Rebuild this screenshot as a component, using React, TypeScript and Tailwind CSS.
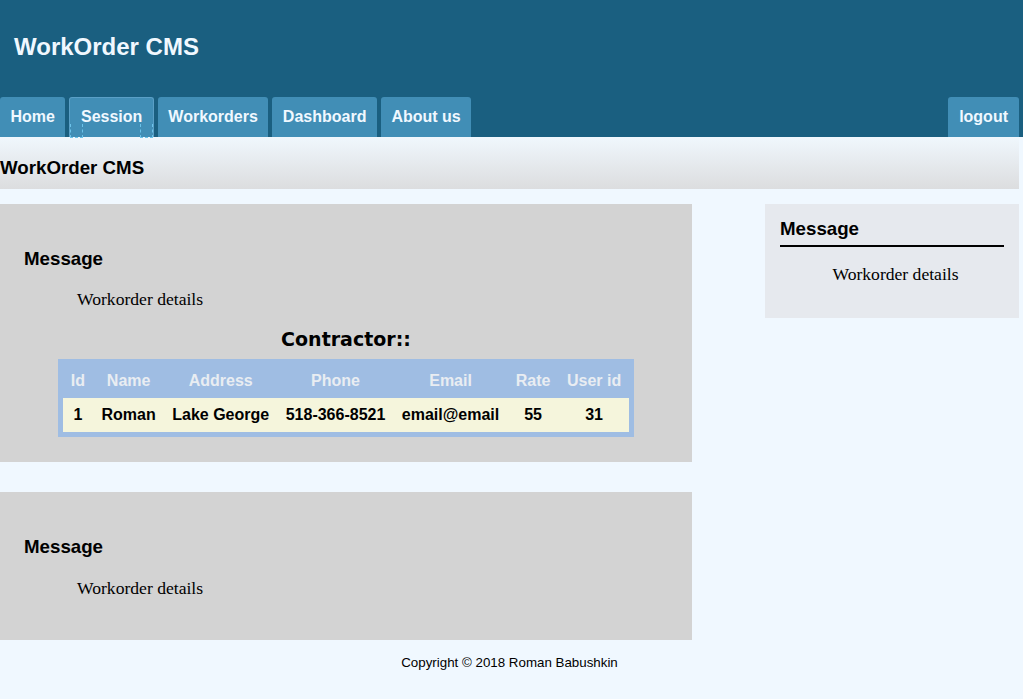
import React from "react";

const tabs = ["Home", "Session", "Workorders", "Dashboard", "About us"];

export default function App() {
  const sans = { fontFamily: '"Liberation Sans", Arial, sans-serif' };
  const serif = { fontFamily: '"Liberation Serif", "Times New Roman", serif' };
  return (
    <div className="min-h-[699px] bg-[#f0f8ff] text-black leading-[normal]" style={sans}>
      <header className="bg-[#1a5f80] h-[137px] flex flex-col">
        <div className="h-[97px] pt-[33px] pl-[14px]">
          <h1 className="text-[24px] font-bold text-[#f0f8ff] leading-[normal]">WorkOrder CMS</h1>
        </div>
        <nav className="h-[40px] flex items-stretch gap-[4px] pr-[4px]">
          {tabs.map((t) =>
            t === "Session" ? (
              <div
                key={t}
                className="relative flex items-center px-[10.5px] pb-[1px] rounded-t-[3px] bg-[#418eb6] border border-[#5a9fc6] border-b-0 text-[16px] font-bold text-[#f0f8ff]"
              >
                {t}
                <span className="absolute left-[0px] bottom-[-1px] w-[13px] h-[14px] border border-dashed border-[#6cc3ea] border-t-0" />
                <span className="absolute right-[0px] bottom-[-1px] w-[13px] h-[14px] border border-dashed border-[#6cc3ea] border-t-0" />
              </div>
            ) : (
              <div
                key={t}
                className="flex items-center px-[10.5px] rounded-t-[3px] bg-[#418eb6] text-[16px] font-bold text-[#f0f8ff]"
              >
                {t}
              </div>
            )
          )}
          <div className="ml-auto flex items-center px-[11px] rounded-t-[3px] bg-[#418eb6] text-[16px] font-bold text-[#f0f8ff]">
            logout
          </div>
        </nav>
      </header>

      <div className="pr-[4px]">
        <div className="h-[52px] pt-[20px] bg-gradient-to-b from-[#f0f7fd] to-[#dcdddf]">
          <h2 className="text-[18.72px] font-bold leading-[normal]">WorkOrder CMS</h2>
        </div>

        <div className="flex mt-[15px]">
          <main className="w-[692px] flex flex-col">
            <section className="bg-[#d3d3d3] h-[258px] pt-[44px] px-[24px]">
              <h3 className="text-[18.72px] font-bold leading-[normal]">Message</h3>
              <p className="mt-[19px] pl-[53px] text-[17.6px] leading-[normal]" style={serif}>
                Workorder details
              </p>
              <h4
                className="mt-[17.5px] text-center text-[19px] font-bold leading-[normal] -ml-[24px] -mr-[24px]"
                style={{ fontFamily: '"DejaVu Sans", Verdana, sans-serif' }}
              >
                Contractor::
              </h4>
              <div className="flex justify-center mt-[9px] -ml-[24px] -mr-[24px]">
                <div className="bg-[#9fbde3] p-[5px]">
                  <table className="border-collapse text-[16px] font-bold">
                    <thead>
                      <tr className="h-[34px] text-[#e9edf2]">
                        {["Id", "Name", "Address", "Phone", "Email", "Rate", "User id"].map((h) => (
                          <th key={h} className="px-[8.25px] text-center font-bold">
                            {h}
                          </th>
                        ))}
                      </tr>
                    </thead>
                    <tbody>
                      <tr className="h-[34px] bg-[#f5f5dc]">
                        {["1", "Roman", "Lake George", "518-366-8521", "email@email", "55", "31"].map((c, i) => (
                          <td key={i} className="px-[8.25px] text-center">
                            {c}
                          </td>
                        ))}
                      </tr>
                    </tbody>
                  </table>
                </div>
              </div>
            </section>

            <section className="bg-[#d3d3d3] h-[148px] mt-[30px] pt-[44px] px-[24px]">
              <h3 className="text-[18.72px] font-bold leading-[normal]">Message</h3>
              <p className="mt-[20px] pl-[53px] text-[17.6px] leading-[normal]" style={serif}>
                Workorder details
              </p>
            </section>

            <footer className="mt-[14.5px] text-[13.33px] leading-[normal] w-[1019px] text-center">
              Copyright © 2018 Roman Babushkin
            </footer>
          </main>

          <aside className="ml-[73px] w-[254px] h-[114px] bg-[#e6e9ee] pt-[14px] px-[15px] self-start">
            <h3 className="text-[18.72px] font-bold leading-[normal] border-b-2 border-black pb-[4.5px]">Message</h3>
            <p className="mt-[17px] pl-[7px] text-center text-[17.6px] leading-[normal]" style={serif}>
              Workorder details
            </p>
          </aside>
        </div>
      </div>
    </div>
  );
}
